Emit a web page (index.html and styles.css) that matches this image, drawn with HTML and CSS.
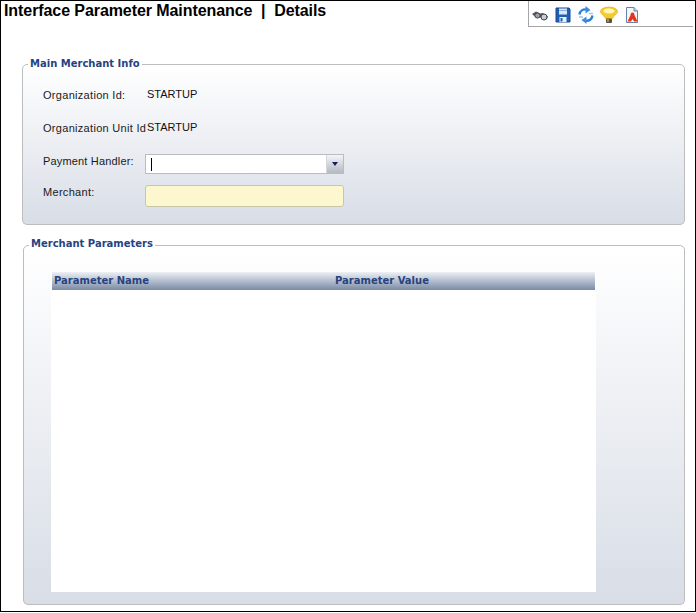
FILE: index.html
```
<!DOCTYPE html>
<html lang="en">
<head>
<meta charset="utf-8">
<title>Interface Parameter Maintenance</title>
<link rel="stylesheet" href="styles.css">
</head>
<body>
<div class="window">
  <header class="top">
    <h1 class="title">Interface Parameter Maintenance&nbsp; |&nbsp; Details</h1>
    <div class="toolbar">
      <svg class="icon" width="18" height="18" viewBox="0 0 18 18"><path d="M1 8 5 5.500l4 2 3-.5 5 3.500-1 2.500-3.500 1-3-2.500-2 0-2 .5z" fill="#55595e"/><circle cx="6.500" cy="9.500" r="2.600" fill="#9a9fa5" stroke="#44484d"/><circle cx="13" cy="11" r="3" fill="#c4ccd6" stroke="#44484d"/></svg>
      <svg class="icon" width="18" height="18" viewBox="0 0 18 18"><path d="M2 2h13l1 1v13H2z" fill="#1f5fb4" stroke="#1a4a90"/><rect x="5" y="2.500" width="8" height="6" fill="#d9e6f5"/><rect x="5" y="4" width="8" height="1" fill="#8fb0d8"/><rect x="5.500" y="11" width="7" height="5" fill="#e8eef5"/><rect x="6.500" y="12" width="2" height="3.500" fill="#2a5ea8"/></svg>
      <svg class="icon" width="18" height="18" viewBox="0 0 18 18" fill="none" stroke="#2b7fd6" stroke-width="2.400"><path d="M2.500 8.500C3 5 6 3 9.500 3.500"/><path d="M15.500 9.500C15 13 12 15.500 8.500 14.500"/><path d="M8.500 0v7.500l5-3.500z" fill="#3a8ee0" stroke="none"/><path d="M9.500 18v-7.500l-5 3.500z" fill="#3a8ee0" stroke="none"/><path d="M12 7.500h4" stroke="#9cc4ec" stroke-width="1.500"/><path d="M2 11h4" stroke="#9cc4ec" stroke-width="1.500"/></svg>
      <svg class="icon" width="18" height="18" viewBox="0 0 18 18"><path d="M9 1c4.600 0 8.500 1.800 8.500 4.500 0 2.700-4 4-5 7h-7c-1-3-5-4.300-5-7C.5 2.800 4.400 1 9 1z" fill="#f6cb2a" stroke="#dca714" stroke-width=".6"/><ellipse cx="9" cy="5" rx="5.500" ry="2.600" fill="#fdf8c0"/><rect x="6" y="12.500" width="6" height="4.500" rx="1" fill="#5e5238"/><rect x="7" y="13" width="2" height="3" fill="#a08e68"/></svg>
      <svg class="icon" width="18" height="18" viewBox="0 0 18 18"><path d="M3.500 1.500H11l3.500 3.500v11.500h-11z" fill="#f4f6fa" stroke="#6d7fa8"/><path d="M11 1.500V5h3.500" fill="#cfd8e8" stroke="#6d7fa8"/><path d="M9.500 6.500c1.400 0 2 1 1.900 2.500l3.100 6.500h-3.300L9.500 13 8 15.500H4.500L7.600 9c-.1-1.500.5-2.500 1.900-2.500z" fill="#e0361c"/></svg>
    </div>
  </header>

  <fieldset class="panel panel-info">
    <legend class="legend">Main Merchant Info</legend>
    <div class="form">
      <div class="row row-one"><span class="label">Organization Id:</span><span class="value">STARTUP</span></div>
      <div class="row row-two"><span class="label">Organization Unit Id</span><span class="value">STARTUP</span></div>
      <div class="row row-three">
        <span class="label label-tight">Payment Handler:</span>
        <div class="combo"><span class="caret"></span><span class="combo-btn"><svg width="6" height="4" viewBox="0 0 6 4"><path d="M0 0h6L3 4z" fill="#14205a"/></svg></span></div>
      </div>
      <div class="row row-four"><span class="label">Merchant:</span><div class="input-req"></div></div>
    </div>
  </fieldset>

  <fieldset class="panel panel-params">
    <legend class="legend">Merchant Parameters</legend>
    <div class="grid">
      <div class="grid-head"><span class="col col-name">Parameter Name</span><span class="col">Parameter Value</span></div>
    </div>
  </fieldset>
</div>
</body>
</html>
```
FILE: styles.css
```
* { box-sizing: border-box; }
html, body { margin: 0; padding: 0; background: #fff; }
body { width: 696px; height: 613px; overflow: hidden; font-family: "Liberation Sans", Arial, sans-serif; }
.window { width: 696px; height: 612px; border: 1px solid #000; background: #fff; padding: 0 10px 0 21px; }
.top { display: flex; justify-content: space-between; height: 39px; margin-left: -17px; margin-right: 1px; }
.title { margin: 1px 0 0 -1px; font-size: 16px; line-height: 18px; font-weight: bold; color: #000; letter-spacing: -0.08px; white-space: nowrap; }
.toolbar { width: 165px; height: 26px; border: 1px solid #a6a6a6; border-top: 0; border-right: 0; display: flex; align-items: center; gap: 5px; padding: 2px 0 0 2px; margin-right: -9px; }
.icon { display: block; flex: none; }
.panel { margin: 0; padding: 0; border: 1px solid #bdbdbd; border-radius: 5px; min-width: 0; width: 663px; background: linear-gradient(#fff, #d8dde6); }
.panel-info { height: 169px; margin-top: 16px; }
.panel-params { height: 369px; margin-top: 11px; margin-left: 1px; width: 662px; padding: 17px 0 0 27px; }
.legend { margin-left: 5px; padding: 0 2px 2px; line-height: 15px; font-weight: bold; color: #27437f; font-family: "DejaVu Sans", sans-serif; font-size: 10px; }
.panel-params .legend { margin-left: -22px; padding-bottom: 4px; }
.form { padding-left: 20px; }
.row { display: flex; align-items: flex-start; font-size: 11px; color: #1a1a1a; letter-spacing: 0.3px; line-height: 13px; }
.row-one { margin-top: 15px; }
.row-two { margin-top: 19px; }
.row-three { margin-top: 19px; }
.row-four { margin-top: 11px; }
.label { width: 104px; flex: none; padding-top: 1px; white-space: nowrap; }
.label-tight { letter-spacing: 0.17px; }
.value { color: #111; letter-spacing: 0; }
.combo { display: flex; justify-content: space-between; width: 199px; height: 20px; margin-left: -2px; background: #fff; border: 1px solid #b8bcc4; }
.caret { width: 1px; height: 13px; margin: 3px 0 0 5px; background: #000; }
.combo-btn { width: 17px; display: flex; align-items: center; justify-content: center; background: linear-gradient(#f4f5f7, #b4b9c2); border-left: 1px solid #d4d7dd; }
.input-req { width: 199px; height: 22px; margin-left: -2px; background: #fdf7cf; border: 1px solid #c8c6a8; border-radius: 3px; }
.grid { width: 545px; height: 320px; background: #fff; }
.grid-head { display: flex; height: 18px; margin: 0 1px; align-items: center; padding: 0 0 2px 2px; background: linear-gradient(#eef0f4, #8494ae 90%, #7c8ca8); font-family: "DejaVu Sans", sans-serif; font-size: 10px; font-weight: bold; color: #27437f; }
.col-name { width: 281px; }
```
